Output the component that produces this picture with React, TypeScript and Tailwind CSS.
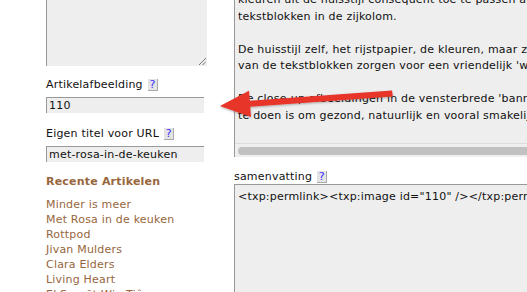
import React from 'react';

const Help = () => (
  <span className="inline-flex items-center justify-center w-[10px] h-[12px] bg-[#e4e4e4] border-r border-b border-[#aaa] text-[#3a2cff] text-[11px] leading-none ml-[5px] tracking-normal">
    ?
  </span>
);

const recent = ['Minder is meer', 'Met Rosa in de keuken', 'Rottpod', 'Jivan Mulders', 'Clara Elders', 'Living Heart', 'El Sereñt Wig Tiên'];

const body = [
  'kleuren uit de huisstijl consequent toe te passen als achtergrond van de',
  'tekstblokken in de zijkolom.',
  '',
  'De huisstijl zelf, het rijstpapier, de kleuren, maar zeker ook de inhoud',
  "van de tekstblokken zorgen voor een vriendelijk 'welkom' gevoel.",
  '',
  "De close-up afbeeldingen in de vensterbrede 'banner' laten zien waar het om",
  'te doen is om gezond, natuurlijk en vooral smakelijk te eten.',
];

function App() {
  return (
    <div className="relative w-[527px] h-[292px] overflow-hidden bg-white font-['DejaVu_Sans',sans-serif] text-[11px] tracking-[0.2px] text-[#111]">
      <div className="flex pl-[46px] gap-[27px]">
        {/* sidebar */}
        <div className="w-[161px] shrink-0 flex flex-col">
          <div className="relative h-[66px] bg-[#eeeeee] border-l border-[#999]">
            <svg className="absolute right-[1px] bottom-[1px]" width="8" height="8" viewBox="0 0 8 8">
              <line x1="1" y1="8" x2="8" y2="1" stroke="#777" strokeWidth="1" />
              <line x1="4.5" y1="8" x2="8" y2="4.5" stroke="#777" strokeWidth="1" />
            </svg>
          </div>

          <div className="mt-[12px] h-[14px] flex items-center leading-[14px]">
            Artikelafbeelding <Help />
          </div>
          <div className="mt-[5px] w-[158px] h-[16px] bg-[#eeeeee] border-l border-t border-[#999] pl-[2px] leading-[15px]">110</div>

          <div className="mt-[14px] h-[14px] flex items-center leading-[14px]">
            Eigen titel voor URL <Help />
          </div>
          <div className="mt-[5px] w-[158px] h-[16px] bg-[#eeeeee] border-l border-t border-[#999] pl-[2px] leading-[15px]">met-rosa-in-de-keuken</div>

          <div className="mt-[13px] h-[14px] leading-[14px] font-bold text-[#97663c]">Recente Artikelen</div>
          <ul className="mt-[8px] text-[#97663c] leading-[15px]">
            {recent.map((r) => (
              <li key={r} className="whitespace-nowrap">{r}</li>
            ))}
          </ul>
        </div>

        {/* main */}
        <div className="flex-1 min-w-0 flex flex-col">
          <div className="h-[157px] bg-[#eeeeee] border-l border-[#999] flex flex-col overflow-hidden">
            <div className="flex-1 overflow-hidden pl-[3px]">
              <div className="-mt-[8px] leading-[16.5px]">
                {body.map((l, i) => (
                  <div key={i} className="whitespace-nowrap h-[16.5px]">{l}</div>
                ))}
              </div>
            </div>
            <div className="h-[14px] border-t border-[#dcdcdc] bg-[#efefef] pl-[3px] pt-[3px]">
              <div className="h-[8px] rounded-full bg-[#c1c1c1] w-[400px]" />
            </div>
          </div>

          <div className="mt-[13px] h-[14px] flex items-center leading-[14px]">
            samenvatting <Help />
          </div>
          <div className="h-[120px] bg-[#eeeeee] border-l border-t border-[#999] pl-[3px] pt-[4px] leading-[16.5px] whitespace-nowrap">
            {'<txp:permlink><txp:image id="110" /></txp:permlink>'}
          </div>
        </div>
      </div>

      {/* red annotation arrow */}
      <svg className="absolute inset-0 pointer-events-none" width="527" height="292" viewBox="0 0 527 292">
        <defs>
          <filter id="sh" x="-10%" y="-50%" width="120%" height="200%">
            <feDropShadow dx="0" dy="1" stdDeviation="1" floodColor="#000" floodOpacity="0.3" />
          </filter>
        </defs>
        <g filter="url(#sh)" fill="#e8352c">
          <polygon points="246,101 392,90.5 392.8,96.5 246.5,107" />
          <polygon points="220,106 249,90.8 251,117" />
        </g>
      </svg>
    </div>
  );
}

export default App;
